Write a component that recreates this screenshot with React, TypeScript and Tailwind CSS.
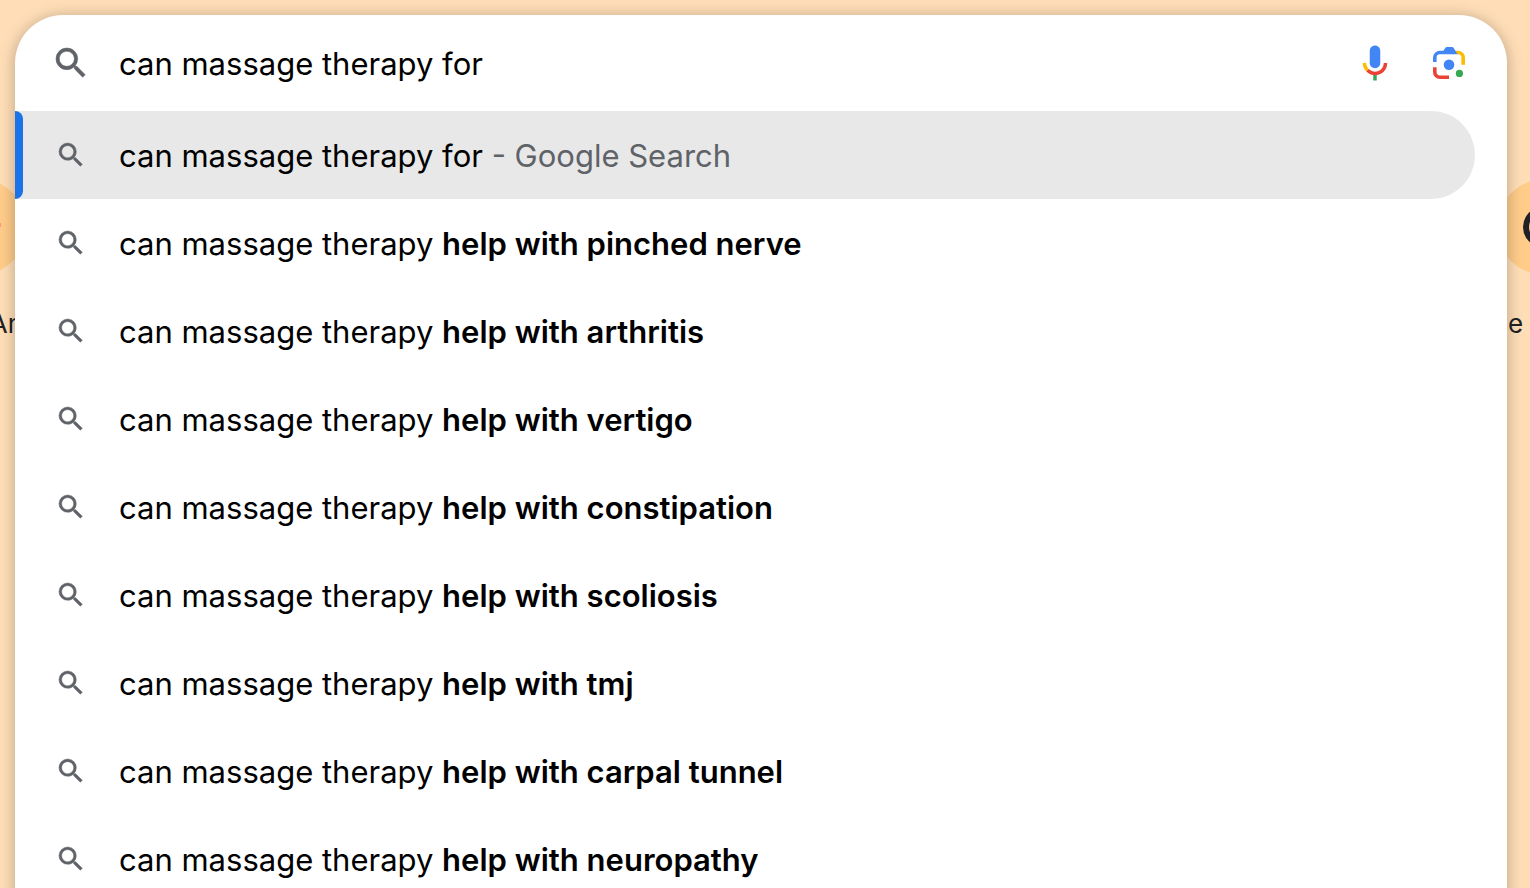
import { useState } from "react";

const COMPLETIONS = [
  "help with pinched nerve",
  "help with arthritis",
  "help with vertigo",
  "help with constipation",
  "help with scoliosis",
  "help with tmj",
  "help with carpal tunnel",
  "help with neuropathy",
];

function SearchIcon({ className }: { className?: string }) {
  return (
    <svg
      viewBox="0 0 24 24"
      fill="currentColor"
      stroke="currentColor"
      strokeWidth="0.35"
      className={className}
      aria-hidden="true"
    >
      <path d="M15.5 14h-.79l-.28-.27A6.471 6.471 0 0 0 16 9.5 6.5 6.5 0 1 0 9.5 16c1.61 0 3.09-.59 4.23-1.57l.27.28v.79l5 4.99L20.49 19l-4.99-5zm-6 0C7.01 14 5 11.99 5 9.5S7.01 5 9.5 5 14 7.01 14 9.5 11.99 14 9.5 14z" />
    </svg>
  );
}

function MicIcon() {
  return (
    <svg viewBox="0 0 24 24" className="h-[42px] w-[42px]" aria-hidden="true">
      <path fill="#4285f4" d="M12 15c1.66 0 3-1.31 3-2.97V5.01C15 3.35 13.66 2 12 2S9 3.34 9 5.01v7.02C9 13.69 10.34 15 12 15z" />
      <path fill="#34a853" d="M11 18.92h2V22h-2z" />
      <path fill="#fbbc04" d="M7.05 16.87C5.78 15.54 5 14.04 5 12h2c0 1.45.56 2.42 1.47 3.38v.32l-1.15 1.18z" />
      <path fill="#ea4335" d="M12 16.93a4.97 5.25 0 0 1-3.54-1.55l-1.41 1.49C8.31 18.21 10.07 19 12 19c3.87 0 6.99-2.92 6.99-7H17c0 2.92-2.24 4.93-5 4.93z" />
    </svg>
  );
}

function LensIcon() {
  return (
    <svg viewBox="0 0 32 32" className="h-8 w-8" aria-hidden="true">
      <path fill="#fbbc04" d="M21.5 3.7H25a7 7 0 0 1 7 7v7h-3.6v-7A3.4 3.4 0 0 0 25 7.2h-1z" />
      <path fill="#4285f4" d="M0 15v-4.300a7 7 0 0 1 7-7h3.300l2-2.800A2 2 0 0 1 14 0h5a2 2 0 0 1 1.700.9L24.500 7.200H7a3.400 3.400 0 0 0-3.400 3.500V15z" />
      <path fill="#ea4335" d="M0 20.300h3.600V25A3.400 3.400 0 0 0 7 28.400h9V32H7a7 7 0 0 1-7-7z" />
      <circle cx="16" cy="17.700" r="5.300" fill="#4285f4" />
      <circle cx="26.400" cy="26.400" r="3.600" fill="#34a853" />
    </svg>
  );
}

// Page shortcuts that peek out on both sides of the search box
function Shortcuts() {
  return (
    <div className="absolute inset-x-0 top-[179px] flex justify-between text-[26px] leading-8 text-[#202124]">
      <a href="#an" className="-ml-[69px] flex w-24 flex-col items-center gap-[33px]">
        <span className="flex h-24 w-24 shrink-0 items-center justify-end rounded-full bg-[#ffcc8a]">
          <span className="mr-[26px] mb-1 h-1 w-2 bg-[#ff9a76]" />
        </span>
        <span className="self-end pr-1">An</span>
      </a>
      <a href="#e" className="-mr-[63px] flex w-24 flex-col gap-[33px]">
        <span className="flex h-24 w-24 shrink-0 items-center justify-center rounded-full bg-[#ffcc8a]">
          <span className="h-10 w-11 rounded-full border-[6px] border-[#202124]" />
        </span>
        <span className="pl-[11px]">e</span>
      </a>
    </div>
  );
}

export default function App() {
  const [query, setQuery] = useState("can massage therapy for");

  return (
    <div className="relative h-screen overflow-hidden bg-[#ffdeb7] pt-[15px] pr-[23px] pl-[15px] font-['Inter',sans-serif]">
      <Shortcuts />
      <main className="relative overflow-hidden rounded-t-[48px] bg-white text-[31px] leading-10 text-black shadow-[0_2px_16px_rgba(0,0,0,0.28)]">
        <form className="flex h-24 items-center pr-[42px] pl-9" onSubmit={(e) => e.preventDefault()}>
          <SearchIcon className="mr-7 h-10 w-10 shrink-0 text-[#5f6368]" />
          <input
            type="text"
            aria-label="Search"
            autoComplete="off"
            value={query}
            onChange={(e) => setQuery(e.target.value)}
            className="min-w-0 flex-1 bg-transparent pt-0.5 outline-none"
          />
          <button type="button" aria-label="Search by voice" className="mr-[37px]">
            <MicIcon />
          </button>
          <button type="button" aria-label="Search by image">
            <LensIcon />
          </button>
        </form>

        <ul>
          <li className="relative pr-8">
            <a href="#search" className="flex h-[88px] items-center rounded-r-full bg-[#e8e8e8] pl-10">
              <span className="absolute inset-y-0 left-0 w-2 rounded-r-lg bg-[#1a73e8]" />
              <SearchIcon className="mr-8 h-8 w-8 shrink-0 text-[#5f6368]" />
              <span className="pt-0.5">
                can massage therapy for <span className="text-[#5f6368]">- Google Search</span>
              </span>
            </a>
          </li>
          {COMPLETIONS.map((text) => (
            <li key={text} className="pr-8">
              <a href="#search" className="flex h-[88px] items-center pl-10">
                <SearchIcon className="mr-8 h-8 w-8 shrink-0 text-[#5f6368]" />
                <span className="pt-0.5">
                  can massage therapy <b className="font-semibold">{text}</b>
                </span>
              </a>
            </li>
          ))}
        </ul>
      </main>
    </div>
  );
}
